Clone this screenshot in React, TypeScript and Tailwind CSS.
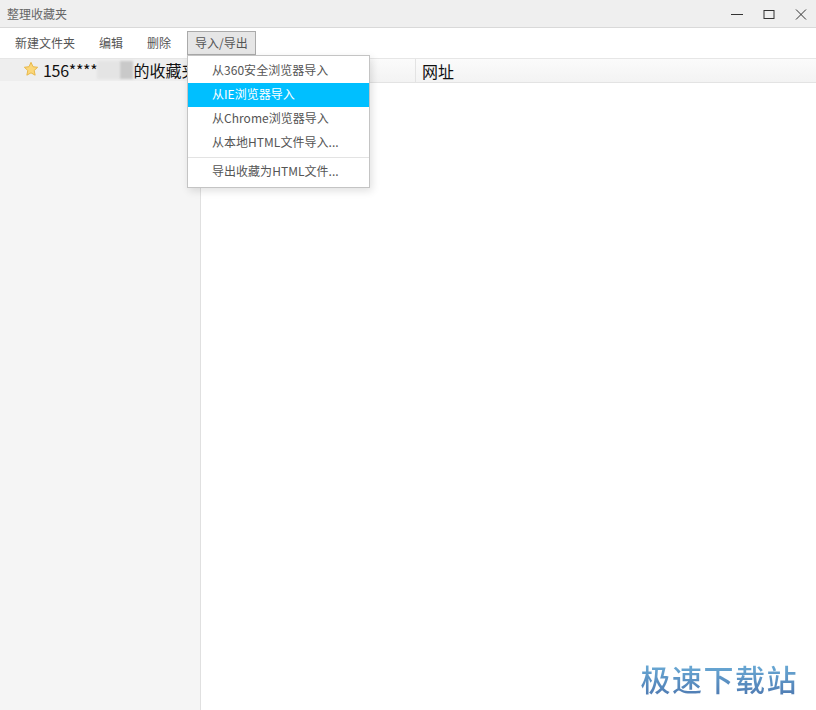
import React from "react";

const items = ["从360安全浏览器导入", "从IE浏览器导入", "从Chrome浏览器导入", "从本地HTML文件导入..."];

export default function App() {
  return (
    <div className="relative flex h-[710px] w-[816px] flex-col overflow-hidden bg-white font-['Noto_Sans_CJK_SC','Open_Sans',sans-serif] text-[12px] text-[#555]">
      {/* title bar */}
      <div className="flex h-[28px] shrink-0 items-center justify-between border-b border-[#d9d9d9] bg-[#efefef] pl-[7px] pr-[9px]">
        <span className="text-[#666]">整理收藏夹</span>
        <div className="flex items-center gap-[20px]">
          <svg width="12" height="12" viewBox="0 0 12 12" stroke="#333" fill="none"><path d="M0 6.5h12" /></svg>
          <svg width="12" height="12" viewBox="0 0 12 12" stroke="#333" fill="none"><rect x="1" y="2.5" width="10" height="8" /></svg>
          <svg width="12" height="12" viewBox="0 0 12 12" stroke="#333" fill="none"><path d="M1 1.5l10 10M11 1.5l-10 10" /></svg>
        </div>
      </div>
      {/* toolbar */}
      <div className="flex h-[31px] shrink-0 items-center border-b border-[#e6e6e6] pl-[7px]">
        <div className="px-[8px]">新建文件夹</div>
        <div className="ml-[8px] px-[8px]">编辑</div>
        <div className="ml-[8px] px-[8px]">删除</div>
        <div className="ml-[8px] flex h-[24px] items-center border border-[#aaa] bg-[#e6e6e6] px-[7px]">导入/导出</div>
      </div>
      {/* body */}
      <div className="flex min-h-0 flex-1">
        <div className="w-[201px] shrink-0 border-r border-[#e0e0e0] bg-[#f5f5f5]">
          <div className="flex h-[22px] items-center overflow-hidden whitespace-nowrap bg-[#eeeeee] pl-[23px] text-[16px] text-[#111]">
            <svg width="16" height="16" viewBox="0 0 24 24" className="mr-[4px] -mt-[3px] shrink-0" fill="#fbd779" stroke="#e8b84a" strokeWidth="1.5" strokeLinejoin="round">
              <path d="M12 2l3 6.6 7 .8-5.2 4.8 1.4 7.1L12 17.7l-6.2 3.6 1.4-7.1L2 9.4l7-.8z" />
            </svg>
            <span className="tracking-[-0.3px]">156****</span>
            <span className="h-[18px] w-[23px] bg-[#e4e4e4] blur-[1px]" />
            <span className="h-[18px] w-[13px] bg-[#c9c9c9] blur-[1px]" />
            <span>的收藏夹</span>
          </div>
        </div>
        <div className="flex-1">
          <div className="flex h-[24px] border-b border-[#e3e3e3] bg-gradient-to-b from-[#fbfbfb] to-[#f3f3f3] text-[16px] text-[#111]">
            <div className="w-[215px] border-r border-[#e3e3e3]" />
            <div className="flex items-center pb-[1px] pl-[6px] pt-[1px]">网址</div>
          </div>
        </div>
      </div>
      {/* dropdown menu */}
      <div className="absolute left-[187px] top-[55px] w-[183px] border border-[#c4c4c4] bg-white pt-[3px] pb-[3px] shadow-[2px_3px_8px_rgba(0,0,0,0.12)]">
        {items.map((t, i) => (
          <div key={t} className={`flex h-[24px] items-center pb-[2px] pl-[24px] tracking-[0.03px] ${i === 1 ? "bg-[#00bfff] text-white" : ""}`}>
            {t}
          </div>
        ))}
        <div className="my-[2px] h-px bg-[#e3e3e3]" />
        <div className="flex h-[24px] items-center pb-[2px] pl-[24px] tracking-[0.03px]">导出收藏为HTML文件...</div>
      </div>
      {/* watermark */}
      <div className="absolute bottom-[12px] right-[18px] bg-gradient-to-b from-[#6fb3dc] to-[#4d78b0] bg-clip-text text-[30px] leading-[40px] font-medium tracking-[1.5px] text-transparent">
        极速下载站
      </div>
    </div>
  );
}
